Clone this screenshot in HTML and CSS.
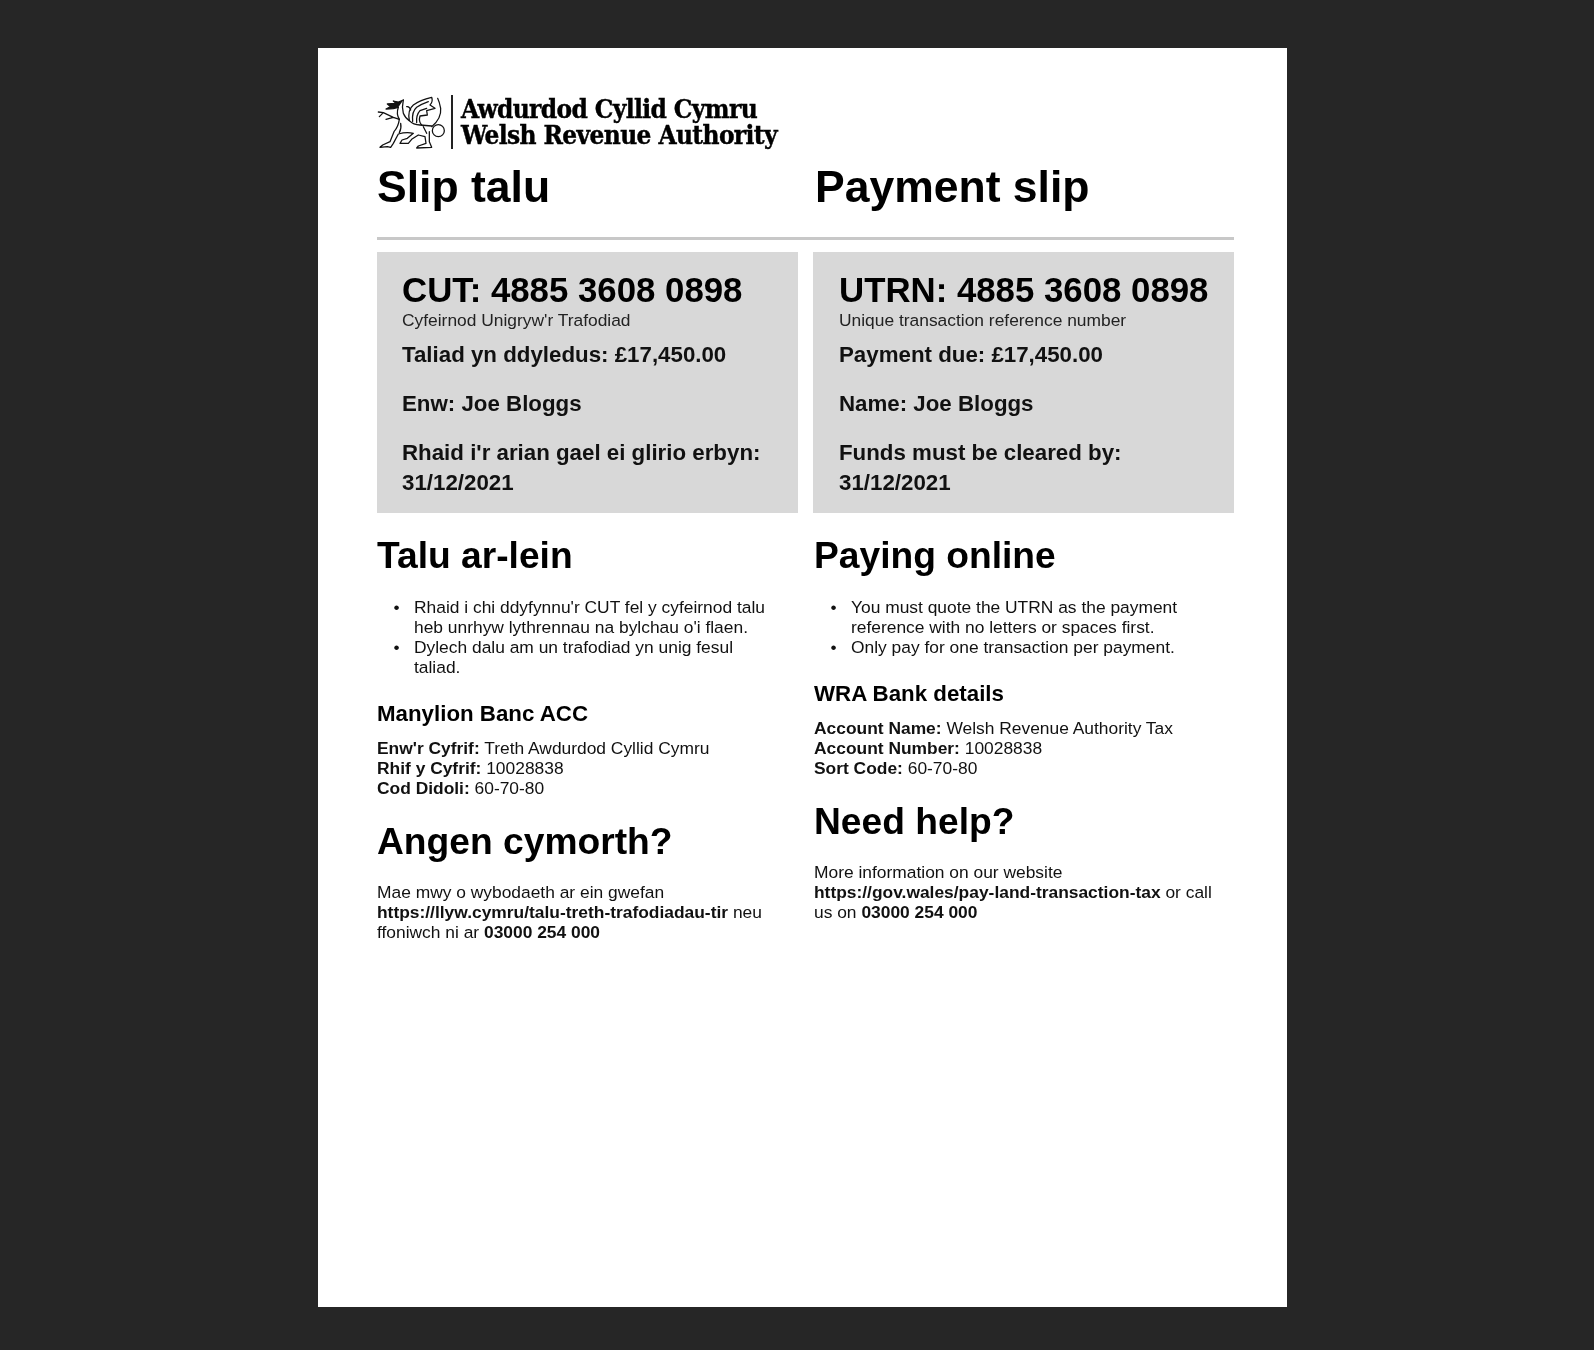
FILE: index.html
```html
<!DOCTYPE html>
<html lang="cy">
<head>
<meta charset="utf-8">
<title>Payment slip</title>
<link rel="stylesheet" href="styles.css">
</head>
<body>
<main class="sheet">
  <header class="brand">
    <svg class="dragon" viewBox="21 15 210 165" aria-hidden="true">
      <g fill="none" stroke="#111" stroke-width="3.8" stroke-linecap="round" stroke-linejoin="round">
        <path d="M100 30 L85 36 L70 33 L78 40 L52 42 L62 50 L48 57 L70 56 L85 52" fill="#111"/>
        <path d="M85 52 Q78 72 88 88 M100 30 Q95 50 100 70 Q106 85 118 92"/>
        <path d="M88 88 L70 82 L40 68 L25 66 M40 68 L28 80 M70 82 L48 88"/>
        <path d="M88 88 Q85 110 72 125 L60 155 L38 165 L30 172 L52 170 L62 172 L70 160 L85 132 Q110 125 130 130 L112 145 L96 150 L90 160 L115 160 L125 148 L145 135 L165 140 L168 160 L145 168 L140 174 L185 172 L178 155 L178 125"/>
        <path d="M118 92 Q130 105 150 105 L185 108"/>
        <path d="M118 92 Q112 60 130 45 Q150 30 185 22 Q190 35 180 45 L195 55 L170 62 L172 75 L150 78 Q145 95 155 105"/>
        <path d="M128 94 Q125 65 140 52 Q155 42 175 35 M140 98 Q138 75 150 62 L170 55 M122 60 Q118 48 110 50"/>
        <circle cx="205" cy="122" r="18"/>
        <path d="M185 110 Q215 85 212 55 Q208 35 203 25"/>
        <path d="M92 100 Q95 115 88 128 M160 110 L170 130"/>
      </g>
    </svg>
    <span class="brand-rule"></span>
    <p class="brand-name">Awdurdod Cyllid Cymru<br>Welsh Revenue Authority</p>
  </header>

  <div class="columns">
    <section class="col">
      <h1>Slip talu</h1>
      <hr class="rule">
      <div class="panel">
        <h2>CUT: 4885 3608 0898</h2>
        <p class="caption">Cyfeirnod Unigryw'r Trafodiad</p>
        <p class="fact">Taliad yn ddyledus: £17,450.00</p>
        <p class="fact">Enw: Joe Bloggs</p>
        <p class="fact">Rhaid i'r arian gael ei glirio erbyn: 31/12/2021</p>
      </div>
      <h3>Talu ar-lein</h3>
      <ul>
        <li>Rhaid i chi ddyfynnu'r CUT fel y cyfeirnod talu heb unrhyw lythrennau na bylchau o'i flaen.</li>
        <li>Dylech dalu am un trafodiad yn unig fesul taliad.</li>
      </ul>
      <h4>Manylion Banc ACC</h4>
      <p class="copy"><b>Enw'r Cyfrif:</b> Treth Awdurdod Cyllid Cymru<br><b>Rhif y Cyfrif:</b> 10028838<br><b>Cod Didoli:</b> 60-70-80</p>
      <h3 class="help">Angen cymorth?</h3>
      <p class="copy">Mae mwy o wybodaeth ar ein gwefan <b class="link">https://llyw.cymru/talu-treth-trafodiadau-tir</b> neu ffoniwch ni ar <b>03000 254 000</b></p>
    </section>

    <section class="col">
      <h1>Payment slip</h1>
      <hr class="rule">
      <div class="panel">
        <h2>UTRN: 4885 3608 0898</h2>
        <p class="caption">Unique transaction reference number</p>
        <p class="fact">Payment due: £17,450.00</p>
        <p class="fact">Name: Joe Bloggs</p>
        <p class="fact">Funds must be cleared by: 31/12/2021</p>
      </div>
      <h3>Paying online</h3>
      <ul>
        <li>You must quote the UTRN as the payment reference with no letters or spaces first.</li>
        <li>Only pay for one transaction per payment.</li>
      </ul>
      <h4>WRA Bank details</h4>
      <p class="copy"><b>Account Name:</b> Welsh Revenue Authority Tax<br><b>Account Number:</b> 10028838<br><b>Sort Code:</b> 60-70-80</p>
      <h3 class="help">Need help?</h3>
      <p class="copy">More information on our website <b class="link">https://gov.wales/pay-land-transaction-tax</b> or call us on <b>03000 254 000</b></p>
    </section>
  </div>
</main>
</body>
</html>
```
FILE: styles.css
```css
* { box-sizing: border-box; }
html, body { margin: 0; }
body {
  height: 1350px;
  background: #262626;
  font-family: "Liberation Sans", Arial, sans-serif;
  color: #000;
  overflow: hidden;
  padding: 48px 0 0 318px;
}
.sheet {
  width: 969px;
  height: 1259px;
  background: #fff;
  padding: 47px 52px 0 59px;
}
.brand {
  display: flex;
  align-items: center;
  height: 54px;
  filter: blur(0.5px);
}
.dragon { width: 70px; height: 55px; flex: none; }
.brand-rule {
  width: 2px;
  height: 54px;
  background: #222;
  margin: 0 8px 0 4px;
  flex: none;
}
.brand-name {
  margin: 0;
  font: 700 26px/26px "DejaVu Serif", serif;
  font-stretch: condensed;
  letter-spacing: -0.62px;
  -webkit-text-stroke: 0.4px #000;
  white-space: nowrap;
}
.columns {
  display: grid;
  grid-template-columns: 421px 421px;
  column-gap: 15px;
  filter: blur(0.5px);
}
.col { min-width: 0; }
h1 {
  margin: 10px 0 0;
  font-size: 44.5px;
  line-height: 56px;
  font-weight: 700;
}
.col + .col h1 { margin-left: 2px; }
.col + .col h3, .col + .col h4, .col + .col .copy { margin-left: 1px; }
.col + .col .panel { padding-left: 26px; }
.col:first-child .rule { margin-right: -15px; }
.rule {
  margin: 22px 0 0;
  border: 0;
  height: 2.5px;
  background: #c8c8c8;
}
.panel {
  margin-top: 12.5px;
  height: 260.5px;
  background: #d8d8d8;
  padding: 18px 25px 0;
}
h2 {
  margin: 0;
  font-size: 34.8px;
  line-height: 40px;
  font-weight: 700;
}
.caption {
  margin: 0 0 10px;
  font-size: 17.4px;
  line-height: 20px;
  color: #222;
}
.fact {
  margin: 0 0 19px;
  font-size: 22.3px;
  line-height: 30px;
  font-weight: 700;
  color: #111;
}
h3 {
  margin: 21.5px 0 0;
  font-size: 37.2px;
  line-height: 42px;
  font-weight: 700;
}
ul {
  margin: 21px 0 0;
  padding: 0 25px 0 37px;
  font-size: 17.4px;
  line-height: 20px;
  color: #111;
}
li::marker { content: "\2022\00a0\00a0\00a0"; }
.col + .col ul { padding-left: 38px; }
h4 {
  margin: 23px 0 0;
  font-size: 22.3px;
  line-height: 28px;
  font-weight: 700;
}
.copy {
  margin: 10px 5px 0 0;
  font-size: 17.4px;
  line-height: 20px;
  color: #111;
}
.link { white-space: nowrap; }
.help { margin-top: 22px; }
.help + .copy { margin-top: 20px; }
```
